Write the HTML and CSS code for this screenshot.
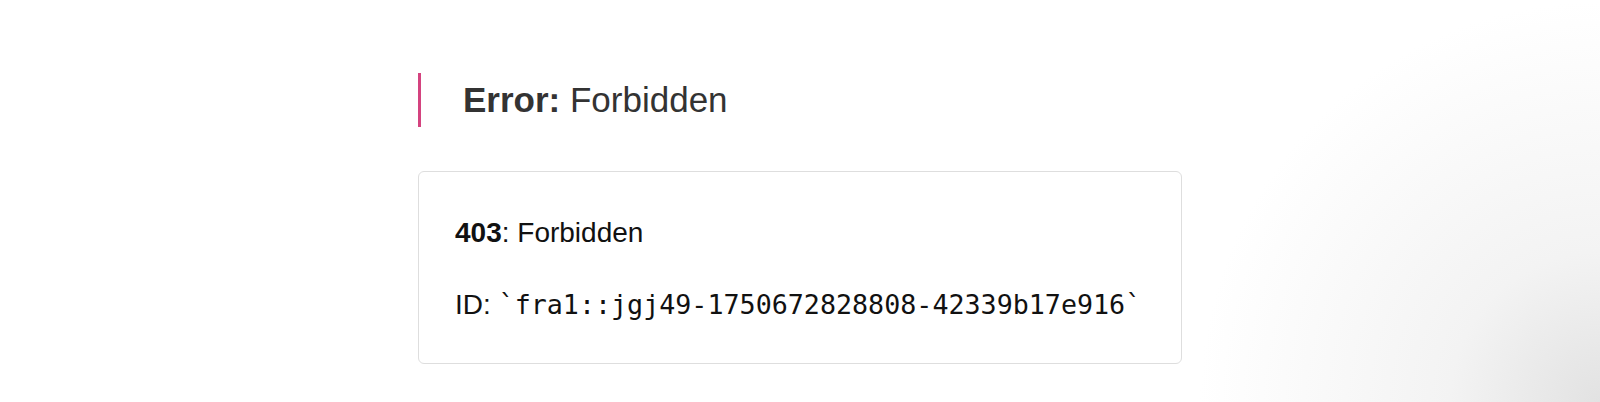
FILE: index.html
```html
<!DOCTYPE html>
<html lang="en">
<head>
  <meta charset="UTF-8" />
  <meta name="viewport" content="width=device-width, initial-scale=1.0"/>
  <title>403: Forbidden</title>
  <link rel="stylesheet" href="styles.css">
</head>
<body>

  <main class="wrap">
    <h1 class="title"><strong>Error:</strong> Forbidden</h1>

    <div class="details">
      <p><strong>403</strong>: Forbidden</p>
      <p>ID: <code>`fra1::jgj49-1750672828808-42339b17e916`</code></p>
    </div>
  </main>

</body>
</html>
```

FILE: styles.css
```css
html, body {
  height: 100%;
}

body {
  margin: 0;
  font-family: "Liberation Sans", Arial, sans-serif;
  color: #111;
  background: radial-gradient(circle at 100% 100%, #e2e2e2 0, #f3f3f3 150px, #fff 400px);
}

.wrap {
  width: 764px;
  margin: 0 auto;
  padding-top: 73px;
}

.title {
  margin: 0;
  padding-left: 42px;
  border-left: 3px solid #d4437f;
  font-size: 35px;
  font-weight: normal;
  line-height: 54px;
  color: #333;
}

.title strong {
  font-weight: bold;
}

.details {
  margin-top: 44px;
  padding: 45px 36px 42px;
  border: 1px solid #dedede;
  border-radius: 6px;
  background: #fff;
  font-size: 28px;
  line-height: 32px;
}

.details p {
  margin: 0;
}

.details p + p {
  margin-top: 40px;
}

code {
  font-family: "DejaVu Sans Mono", "Liberation Mono", monospace;
  font-size: 26.7px;
}
```
